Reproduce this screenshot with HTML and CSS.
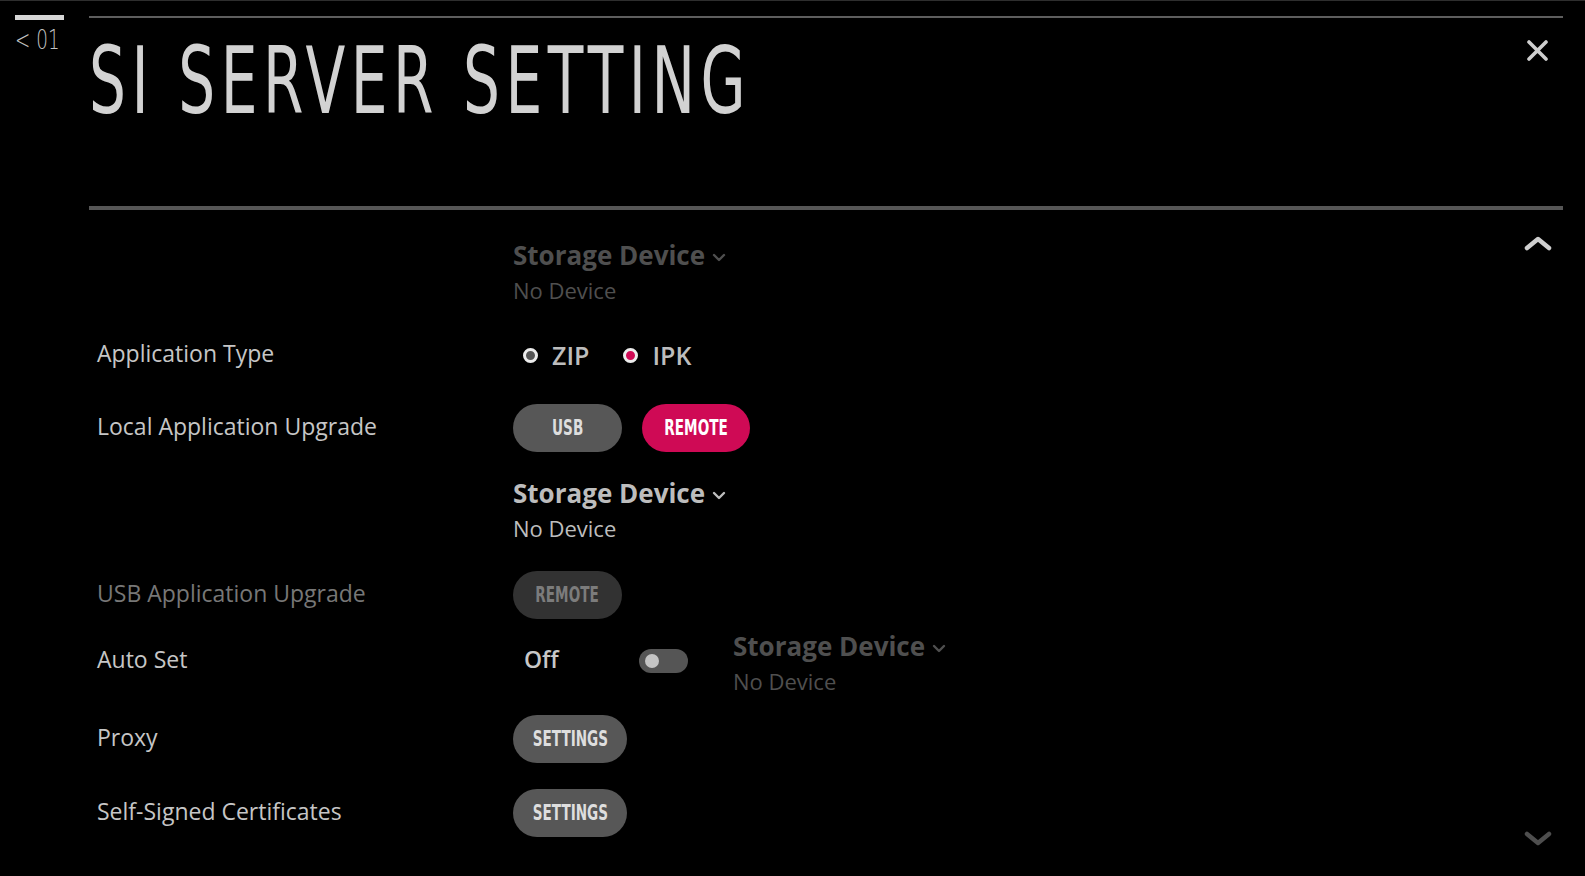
FILE: index.html
```html
<!DOCTYPE html>
<html lang="en">
<head>
<meta charset="utf-8">
<title>SI Server Setting</title>
<link rel="stylesheet" href="styles.css">
</head>
<body>
<div class="screen">
  <aside class="side">
    <div class="side-bar"></div>
    <div class="side-num">&lt; 01</div>
  </aside>
  <main class="main">
    <header class="header">
      <h1 class="title">SI SERVER SETTING</h1>
      <div class="close" aria-label="Close">
        <svg width="21" height="21" viewBox="0 0 21 21"><path d="M2 2L19 19M19 2L2 19" stroke="#cfcfcf" stroke-width="3.6" stroke-linecap="round" fill="none"/></svg>
      </div>
    </header>
    <section class="content">
      <svg class="scroll scroll-up" width="28" height="16" viewBox="0 0 28 16"><path d="M3 13L14 4L25 13" stroke="#cfcfcf" stroke-width="4.5" stroke-linecap="round" stroke-linejoin="round" fill="none"/></svg>

      <div class="row row-top">
        <div class="label"></div>
        <div class="storage faded">
          <div class="storage-title">Storage Device<svg class="chev" width="14" height="9" viewBox="0 0 14 9"><path d="M2 2L7 7L12 2" stroke="currentColor" stroke-width="2.4" stroke-linecap="round" stroke-linejoin="round" fill="none"/></svg></div>
          <div class="storage-sub">No Device</div>
        </div>
      </div>

      <div class="row row-type">
        <div class="label">Application Type</div>
        <div class="radios">
          <span class="radio"><span class="dot"></span>ZIP</span>
          <span class="radio"><span class="dot dot-on"></span>IPK</span>
        </div>
      </div>

      <div class="row row-local">
        <div class="label">Local Application Upgrade</div>
        <div class="btns">
          <span class="btn"><span class="btn-text">USB</span></span>
          <span class="btn btn-on"><span class="btn-text">REMOTE</span></span>
        </div>
      </div>

      <div class="row row-storage">
        <div class="label"></div>
        <div class="storage">
          <div class="storage-title">Storage Device<svg class="chev" width="14" height="9" viewBox="0 0 14 9"><path d="M2 2L7 7L12 2" stroke="currentColor" stroke-width="2.4" stroke-linecap="round" stroke-linejoin="round" fill="none"/></svg></div>
          <div class="storage-sub">No Device</div>
        </div>
      </div>

      <div class="row row-usb">
        <div class="label label-off">USB Application Upgrade</div>
        <span class="btn btn-disabled"><span class="btn-text">REMOTE</span></span>
      </div>

      <div class="row row-auto">
        <div class="label label-auto">Auto Set</div>
        <div class="auto">
          <span class="off">Off</span>
          <span class="toggle"><span class="knob"></span></span>
        </div>
        <div class="storage faded">
          <div class="storage-title">Storage Device<svg class="chev" width="14" height="9" viewBox="0 0 14 9"><path d="M2 2L7 7L12 2" stroke="currentColor" stroke-width="2.4" stroke-linecap="round" stroke-linejoin="round" fill="none"/></svg></div>
          <div class="storage-sub">No Device</div>
        </div>
      </div>

      <div class="row row-proxy">
        <div class="label">Proxy</div>
        <span class="btn btn-wide"><span class="btn-text">SETTINGS</span></span>
      </div>

      <div class="row row-cert">
        <div class="label">Self-Signed Certificates</div>
        <span class="btn btn-wide"><span class="btn-text">SETTINGS</span></span>
      </div>

      <svg class="scroll scroll-down" width="28" height="16" viewBox="0 0 28 16"><path d="M3 3L14 12L25 3" stroke="#4e4e4e" stroke-width="4.5" stroke-linecap="round" stroke-linejoin="round" fill="none"/></svg>
    </section>
  </main>
</div>
</body>
</html>
```

FILE: styles.css
```css
html, body {
  margin: 0;
  padding: 0;
  background: #000;
}

.screen {
  width: 1585px;
  height: 876px;
  box-sizing: border-box;
  border-top: 1px solid #2e2e2e;
  display: flex;
  overflow: hidden;
  background: #000;
  font-family: "Open Sans", Lato, sans-serif;
}

.side {
  width: 89px;
  flex: none;
  padding-top: 14px;
}

.side-bar {
  width: 49px;
  height: 5px;
  margin-left: 15px;
  background: #d6d6d6;
}

.side-num {
  margin: 6px 0 0 15px;
  font-family: "DejaVu Sans", sans-serif;
  font-stretch: condensed;
  font-weight: 200;
  font-size: 27px;
  line-height: 28px;
  color: #c4c4c4;
  white-space: nowrap;
  transform: scaleX(0.68);
  transform-origin: left center;
}

.main {
  width: 1474px;
  flex: none;
  display: flex;
  flex-direction: column;
  padding-top: 15px;
}

.header {
  height: 188px;
  border-top: 2px solid #5e5e5e;
  border-bottom: 4px solid #565656;
  display: flex;
  justify-content: space-between;
  align-items: flex-start;
}

.title {
  margin: 13px 0 0 0;
  font-family: "DejaVu Sans", sans-serif;
  font-stretch: condensed;
  font-weight: 400;
  font-size: 93px;
  line-height: 100px;
  color: #d2d2d2;
  letter-spacing: 8px;
  white-space: nowrap;
  transform: scaleX(0.695);
  transform-origin: left center;
}

.close {
  margin: 22px 15px 0 0;
  width: 21px;
  height: 21px;
}

.close svg { display: block; }

.content {
  position: relative;
  flex: 1;
}

.scroll {
  position: absolute;
  right: 11px;
  display: block;
}

.scroll-up { top: 25px; }
.scroll-down { top: 621px; }

.row {
  display: flex;
  align-items: center;
}

.label {
  width: 424px;
  flex: none;
  box-sizing: border-box;
  padding-left: 8px;
  font-size: 23px;
  line-height: 30px;
  color: #c6c6c6;
  margin-top: -5px;
}

.label-off { color: #777; }

.storage { color: #bdbdbd; }
.storage.faded { color: #4f4f4f; }

.storage-title {
  font-weight: 700;
  font-size: 26px;
  line-height: 30px;
  white-space: nowrap;
}

.chev {
  vertical-align: 3px;
  margin-left: 7px;
}

.storage-sub {
  margin-top: 5px;
  font-size: 22px;
  line-height: 30px;
}

.row-top { margin-top: 30px; }
.row-type { margin-top: 30px; height: 40px; }
.row-local { margin-top: 29px; }
.row-storage { margin-top: 26px; }
.row-usb { margin-top: 28px; }
.row-auto { margin-top: 12px; align-items: flex-start; }
.row-proxy { margin-top: 19px; }
.row-cert { margin-top: 26px; }

.radios {
  display: flex;
  align-items: center;
  padding-left: 10px;
  gap: 34px;
}

.radio {
  display: flex;
  align-items: center;
  gap: 14px;
  font-size: 25px;
  font-weight: 600;
  color: #bdbdbd;
}

.dot {
  width: 15px;
  height: 15px;
  box-sizing: border-box;
  border-radius: 50%;
  border: 3px solid #ececec;
  background: #555;
}

.dot-on { background: #cf0a55; }

.btns {
  display: flex;
  gap: 20px;
}

.btn {
  display: flex;
  align-items: center;
  justify-content: center;
  width: 109px;
  height: 48px;
  border-radius: 24px;
  background: #575757;
  color: #dedede;
  font-family: "DejaVu Sans", sans-serif;
  font-stretch: condensed;
  font-weight: 700;
  font-size: 21px;
}

.btn-text {
  display: inline-block;
  transform: scaleX(0.72);
  white-space: nowrap;
}

.btn-on {
  width: 108px;
  background: #cf0a55;
  color: #fff;
}

.btn-disabled {
  background: #323232;
  color: #7c7c7c;
}

.btn-wide { width: 114px; }

.label-auto { margin-top: 13px; }

.auto {
  width: 220px;
  flex: none;
  display: flex;
  align-items: center;
  margin-top: 13px;
  height: 30px;
}

.off {
  margin-left: 11px;
  width: 115px;
  font-size: 23px;
  font-weight: 600;
  color: #c8c8c8;
}

.toggle {
  width: 49px;
  height: 24px;
  border-radius: 12px;
  background: #555;
  display: flex;
  align-items: center;
  padding-left: 6px;
  box-sizing: border-box;
  margin-top: 4px;
}

.knob {
  width: 14px;
  height: 14px;
  border-radius: 50%;
  background: #c4c4c4;
}
```
